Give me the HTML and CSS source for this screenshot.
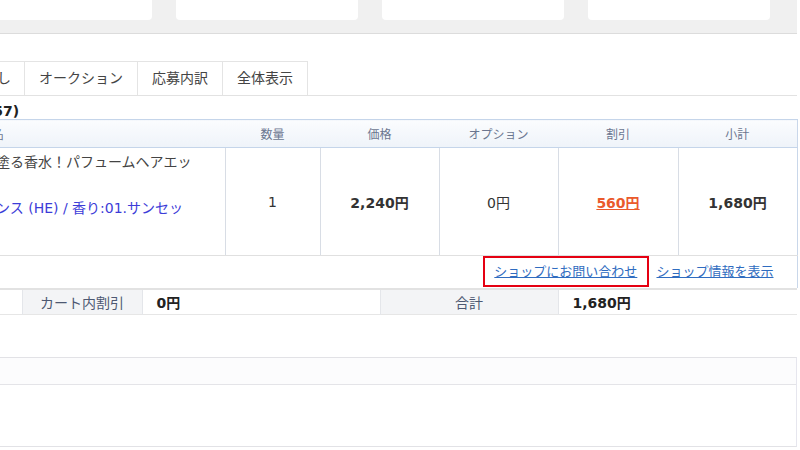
FILE: index.html
```html
<!DOCTYPE html>
<html lang="ja">
<head>
    <meta charset="UTF-8">
    <meta name="viewport" content="width=device-width, initial-scale=1.0">
    <title>カート</title>
    <link rel="stylesheet" href="styles.css">
</head>
<body>

    <div class="main">
        <div class="summary">
            <div class="card"></div>
            <div class="card"></div>
            <div class="card"></div>
            <div class="card"></div>
        </div>

        <ul class="tabs">
            <li class="tab">指定なし</li>
            <li class="tab">オークション</li>
            <li class="tab">応募内訳</li>
            <li class="tab">全体表示</li>
        </ul>

        <h2 class="list-title">カート (57)</h2>

        <table class="items">
            <colgroup>
                <col style="width: 285px">
                <col style="width: 95px">
                <col style="width: 119px">
                <col style="width: 119px">
                <col style="width: 120px">
                <col style="width: 119px">
            </colgroup>
            <thead>
                <tr>
                    <th class="col-name">商品名</th>
                    <th>数量</th>
                    <th>価格</th>
                    <th>オプション</th>
                    <th>割引</th>
                    <th>小計</th>
                </tr>
            </thead>
            <tbody>
                <tr class="item-row">
                    <td class="col-name">
                        <div class="item-name">髪に塗る香水！パフュームヘアエッ</div>
                        <a class="item-variant" href="#">ッセンス (HE) / 香り:01.サンセッ</a>
                    </td>
                    <td>1</td>
                    <td class="amount">2,240円</td>
                    <td>0円</td>
                    <td><a class="discount" href="#">560円</a></td>
                    <td class="amount">1,680円</td>
                </tr>
                <tr class="shop-row">
                    <td colspan="6">
                        <span class="highlight"><a class="shop-link" href="#">ショップにお問い合わせ</a></span>
                        <a class="shop-link" href="#">ショップ情報を表示</a>
                    </td>
                </tr>
            </tbody>
        </table>

        <table class="totals">
            <colgroup>
                <col style="width: 82px">
                <col style="width: 120px">
                <col style="width: 238px">
                <col style="width: 178px">
                <col style="width: 239px">
            </colgroup>
            <tr>
                <td></td>
                <th>カート内割引</th>
                <td class="amount">0円</td>
                <th>合計</th>
                <td class="amount">1,680円</td>
            </tr>
        </table>

        <div class="panel">
            <div class="panel-head"></div>
            <div class="panel-body"></div>
        </div>
    </div>

</body>
</html>
```

FILE: styles.css
```css
html, body {
    overflow: hidden;
}

body {
    margin: 0;
    font-family: "DejaVu Sans", "Noto Sans CJK JP", sans-serif;
    font-size: 14px;
    color: #333;
    background-color: #fff;
}

.main {
    margin-left: -60px;
    margin-right: 3px;
}

/* summary cards strip */
.summary {
    display: flex;
    gap: 24px;
    padding: 0 0 13px 30px;
    background-color: #f0f0f0;
    border-bottom: 1px solid #dcdcdc;
}

.card {
    width: 182px;
    height: 20px;
    background-color: #fff;
    border-radius: 0 0 4px 4px;
}

/* tabs */
.tabs {
    display: flex;
    list-style: none;
    margin: 27px 0 0;
    padding: 0;
    border-bottom: 1px solid #e2e2e2;
}

.tab {
    height: 33px;
    line-height: 32px;
    padding: 0 14px;
    border: 1px solid #e4e4e4;
    border-bottom: none;
    margin-right: -1px;
    color: #444;
    background-color: #fff;
}

.tab:first-child {
    padding-right: 13px;
}

.list-title {
    margin: 0;
    height: 20px;
    padding-top: 3px;
    line-height: 25px;
    font-size: 14px;
    font-weight: bold;
    color: #222;
    overflow: visible;
}

/* item table */
.items {
    width: 857px;
    table-layout: fixed;
    border-collapse: collapse;
    border-right: 1px solid #c9d7ea;
}

.items th {
    height: 27px;
    padding: 0;
    font-size: 12px;
    font-weight: normal;
    color: #6b7690;
    background: linear-gradient(#fbfcfe, #eef3f9);
    border-top: 1px solid #c5d5ea;
    border-bottom: 1px solid #c5d5ea;
}

.items th.col-name {
    text-align: left;
    padding-left: 28px;
}

.item-row td {
    height: 107px;
    padding: 0;
    text-align: center;
    border-left: 1px solid #d8dde5;
    border-bottom: 1px solid #e0e0e0;
    color: #333;
}

.item-row td.col-name {
    vertical-align: top;
    text-align: left;
    padding-left: 28px;
    border-left: none;
    white-space: nowrap;
    overflow: hidden;
}

.item-name {
    margin-top: 4px;
    line-height: 20px;
    color: #444;
}

.item-variant {
    display: block;
    margin-top: 26px;
    line-height: 20px;
    color: #3c3cd8;
    text-decoration: none;
}

.amount {
    font-weight: bold;
    color: #222;
}

.discount {
    font-weight: bold;
    color: #ea5a2c;
}

.shop-row td {
    height: 32px;
    padding: 0 23px 0 0;
    vertical-align: top;
    text-align: right;
    font-size: 13px;
    line-height: 17px;
}

.highlight {
    display: inline-block;
    padding: 5px 10px 5px 9px;
    border: 2px solid #e50012;
}

.shop-link {
    color: #2f6cc0;
}

.highlight + .shop-link {
    margin-left: 3px;
}

/* totals */
.totals {
    width: 857px;
    table-layout: fixed;
    border-collapse: collapse;
    border-top: 2px solid #e2e2e2;
    border-bottom: 1px solid #e6e6e6;
}

.totals th,
.totals td {
    height: 24px;
    padding: 0;
    font-size: 14px;
}

.totals th {
    font-weight: normal;
    color: #4d5872;
    background-color: #f3f4f6;
    border-left: 1px solid #e4e6ea;
    border-right: 1px solid #e4e6ea;
}

.totals td.amount {
    padding-left: 14px;
}

/* lower panel */
.panel {
    margin-top: 42px;
    border: 1px solid #e2e2e6;
    border-right-color: #e6e6ee;
}

.panel-head {
    height: 26px;
    background-color: #fcfcfd;
    border-bottom: 1px solid #e4e4e8;
}

.panel-body {
    height: 61px;
}
```
